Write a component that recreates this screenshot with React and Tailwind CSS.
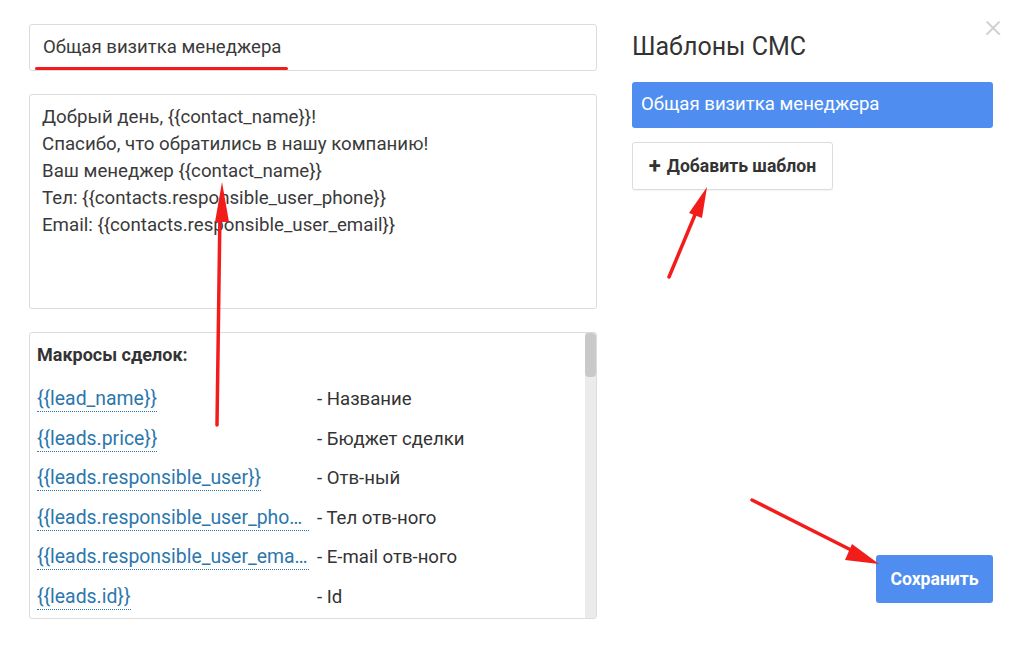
import React from "react";

const macros = [
  ["{{lead_name}}", "- Название"],
  ["{{leads.price}}", "- Бюджет сделки"],
  ["{{leads.responsible_user}}", "- Отв-ный"],
  ["{{leads.responsible_user_phone}}", "- Тел отв-ного"],
  ["{{leads.responsible_user_email}}", "- E-mail отв-ного"],
  ["{{leads.id}}", "- Id"],
];

const lines = [
  "Добрый день, {{contact_name}}!",
  "Спасибо, что обратились в нашу компанию!",
  "Ваш менеджер {{contact_name}}",
  "Тел: {{contacts.responsible_user_phone}}",
  "Email: {{contacts.responsible_user_email}}",
];

export default function App() {
  return (
    <div
      className="relative w-[1024px] h-[649px] bg-white overflow-hidden text-[#333]"
      style={{ fontFamily: "Roboto, 'Noto Sans', sans-serif" }}
    >
      <div className="flex gap-[35px] pl-[29px] pt-[24px] pr-[31px]">
        {/* left column */}
        <div className="w-[568px] flex flex-col">
          <div className="h-[47px] border border-[#dcdcdc] rounded-[3px] flex items-center px-[13px] text-[18.6px] text-[#3a3a3a]">
            Общая визитка менеджера
          </div>
          <div className="mt-[23px] h-[215px] border border-[#dcdcdc] rounded-[3px] px-[12px] pt-[9px] text-[18.7px] leading-[27px] text-[#3a3a3a]">
            {lines.map((l) => (
              <div key={l}>{l}</div>
            ))}
          </div>
          <div className="mt-[23px] h-[287px] border border-[#dcdcdc] rounded-[3px] flex overflow-hidden">
            <div className="flex-1 pl-[7px] pt-[10px]">
              <div className="font-bold text-[18px] text-[#333] h-[24px] leading-[24px]">
                Макросы сделок:
              </div>
              <div className="mt-[20px] flex flex-col">
                {macros.map(([k, v]) => (
                  <div key={k} className="flex h-[39.5px] items-start text-[18.6px] leading-[24px]">
                    <div className="w-[280px] shrink-0 pr-[8px]">
                      <span className="block truncate text-[19.4px] text-[#2b77ad] border-b border-dotted border-[#2b77ad] w-fit max-w-full">
                        {k}
                      </span>
                    </div>
                    <div className="text-[#333]">{v}</div>
                  </div>
                ))}
              </div>
            </div>
            <div className="w-[11px] bg-[#ebebeb] flex flex-col">
              <div className="h-[44px] bg-[#c9c9c9] rounded-[4px]" />
            </div>
          </div>
        </div>
        {/* right column */}
        <div className="flex-1 flex flex-col">
          <div className="flex items-start justify-between">
            <div className="mt-[8px] text-[25px] text-[#333] leading-[30px]">Шаблоны СМС</div>
            <div className="-mt-[15px] -mr-[9px] text-[#cfcfcf] text-[34px] leading-[32px] font-light">×</div>
          </div>
          <div className="mt-[20px] h-[46px] bg-[#4f8ef0] rounded-[3px] flex items-center px-[9px] text-white text-[18.6px]">
            Общая визитка менеджера
          </div>
          <div className="mt-[14px] w-[201px] h-[48px] border border-[#dcdcdc] rounded-[3px] flex items-center justify-center gap-[6px] font-bold text-[17.6px] text-[#333] shadow-[0_1px_1px_rgba(0,0,0,0.05)]">
            <span className="text-[22px] leading-none">+</span>
            <span>Добавить шаблон</span>
          </div>
          <div className="flex-1" />
          <div className="self-end mb-[16px] w-[117px] h-[48px] bg-[#4f8ef0] rounded-[3px] flex items-center justify-center text-white font-bold text-[17.6px]">
            Сохранить
          </div>
        </div>
      </div>

      {/* annotations */}
      <div className="absolute left-[35px] top-[67px] w-[253px] h-[3px] bg-[#f21d1a] rounded-full" />
      <svg className="absolute inset-0 pointer-events-none" width="1024" height="649">
        <g stroke="#f21d1a" strokeWidth="3.5" strokeLinecap="round" fill="#f21d1a">
          <line x1="217" y1="425" x2="220" y2="210" />
          <polygon points="222,182 215,222 229,222" stroke="none" />
          <line x1="669" y1="277" x2="697" y2="210" />
          <polygon points="707,187 689,213 702,218" stroke="none" />
          <line x1="752" y1="500" x2="855" y2="552" />
          <polygon points="879,564 852,544 845,560" stroke="none" />
        </g>
      </svg>
    </div>
  );
}
